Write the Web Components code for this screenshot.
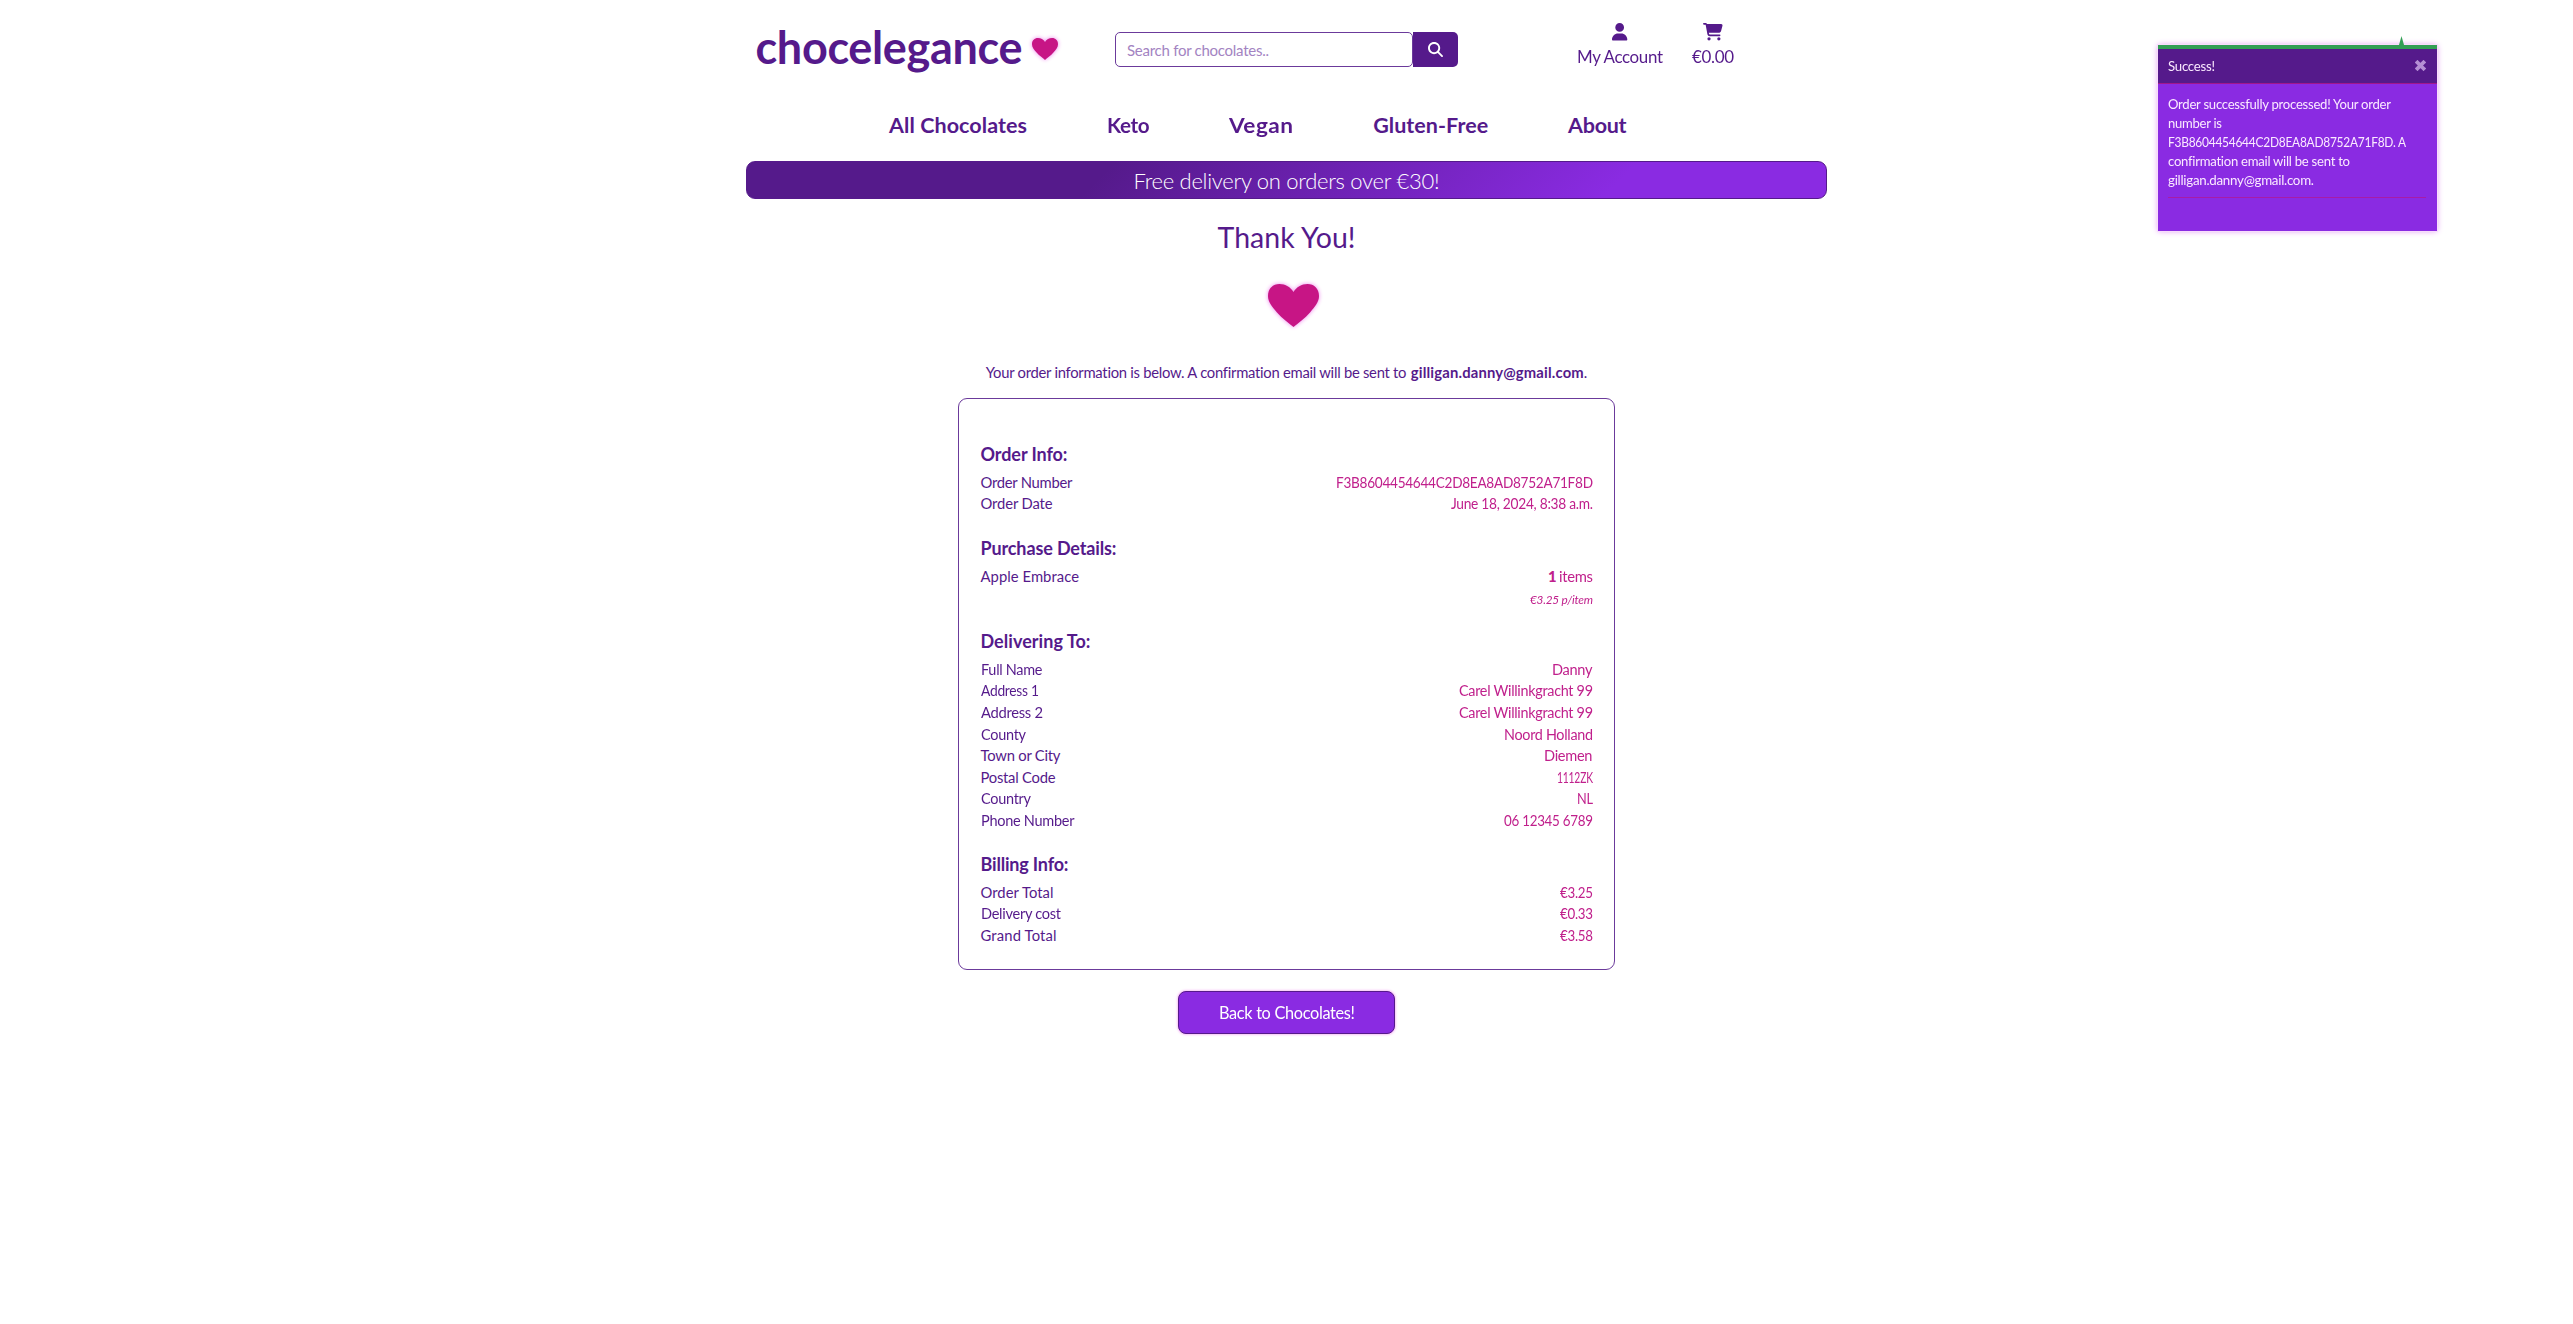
<!DOCTYPE html>
<html lang="en">
<head>
<meta charset="utf-8">
<title>chocelegance</title>
<style>
body{margin:0;background:#fff;color:#551a8b;font-family:Lato,"Liberation Sans",sans-serif}
</style>
</head>
<body>
<shop-page></shop-page>
<script>
const mount=(el,css,html)=>{
  const root=el.attachShadow({mode:'open'});
  const t=document.createElement('template');
  t.innerHTML=`<style>*{box-sizing:border-box}${css}</style>${html}`;
  root.append(t.content.cloneNode(true));
  return root;
};

/* A single line of text that fills the width given in "w":
   slight tracking first, then horizontal scaling for the rest. */
customElements.define('fit-text',class extends HTMLElement{
  connectedCallback(){
    if(this.shadowRoot)return;
    const root=mount(this,`:host{display:inline-block;white-space:nowrap}span{display:inline-block;transform-origin:0 50%}`,`<span><slot></slot></span>`);
    const w=+this.getAttribute('w');
    if(!w)return;
    const span=root.querySelector('span');
    const n=Math.max(1,this.textContent.length-1);
    const natural=span.getBoundingClientRect().width;
    const limit=parseFloat(getComputedStyle(this).fontSize)*.02;
    const gap=Math.max(-limit,Math.min(limit,(w-natural)/n));
    span.style.letterSpacing=gap+'px';
    span.style.transform=`scaleX(${w/(natural+gap*n)})`;
    span.style.marginRight='-100px';
    this.style.width=w+'px';
  }
});

customElements.define('glow-heart',class extends HTMLElement{
  constructor(){super();mount(this,`:host{display:block}svg{display:block;width:100%;height:100%;overflow:visible;filter:drop-shadow(0 0 2px #ee82ee)}`,
  `<svg viewBox="0 0 51 43" preserveAspectRatio="none"><path fill="#c71585" d="M25.5 43C21 39 14 34.500 9 28.500C4 22.500 0 18 0 12C0 4.500 5 0 11.500 0C17.500 0 22.500 3 25.500 8C28.500 3 33.500 0 39.500 0C46 0 51 4.500 51 12C51 18 47 22.500 42 28.500C37 34.500 30 39 25.500 43Z"/></svg>`)}
});

customElements.define('search-box',class extends HTMLElement{
  constructor(){super();mount(this,`
  :host{display:flex;width:343px;height:35px}
  .in{width:298px;border:1px solid #6b3a9b;border-radius:5px;display:flex;align-items:center;padding-left:11px;font-size:15px;color:#a383c2;font-weight:400}
  .go{width:45px;background:#551a8b;border-radius:0 5px 5px 0;display:flex;align-items:center;justify-content:center}
  svg{width:15px;height:15px}`,
  `<div class="in"><fit-text w="142">Search for chocolates..</fit-text></div><div class="go"><svg viewBox="0 0 512 512" fill="#fff"><path d="M416 208c0 45.900-14.900 88.300-40 122.700L502.600 457.400c12.500 12.500 12.500 32.800 0 45.300s-32.800 12.500-45.300 0L330.700 376c-34.400 25.200-76.800 40-122.700 40C93.100 416 0 322.900 0 208S93.100 0 208 0S416 93.100 416 208zM208 352a144 144 0 1 0 0-288 144 144 0 1 0 0 288z"/></svg></div>`)}
});

customElements.define('header-link',class extends HTMLElement{
  constructor(){super();mount(this,`
  :host{display:flex;flex-direction:column;align-items:center;gap:5.500px;font-size:17px;line-height:22px;font-weight:400;margin-top:23px}
  ::slotted(svg){display:block;height:17.500px;fill:#551a8b}`,`<slot name="icon"></slot><slot></slot>`)}
});

customElements.define('main-nav',class extends HTMLElement{
  constructor(){super();mount(this,`
  :host{display:flex;gap:79.9px;height:61px;padding:11px 0 0 143px;font-size:21.500px;line-height:28px;font-weight:700}`,`<slot></slot>`)}
});

customElements.define('promo-banner',class extends HTMLElement{
  constructor(){super();mount(this,`
  :host{display:flex;justify-content:center;height:38px;border:1px solid #551a8b;border-radius:9px;background:linear-gradient(135deg,#551a8b 33%,#8a2be2 80%);color:#fff;font-size:22px;line-height:38px;font-weight:300}`,`<slot></slot>`)}
});

customElements.define('info-row',class extends HTMLElement{
  constructor(){super();mount(this,`
  :host{display:flex;justify-content:space-between;font-size:14.800px;line-height:21.6px;height:21.6px}
  .v{color:#c0208c;margin-left:auto;display:flex;gap:2px}`,`<slot name="label"></slot><div class="v"><slot></slot></div>`)}
});

customElements.define('info-section',class extends HTMLElement{
  constructor(){super();mount(this,`
  :host{display:block}
  .h{font-size:18px;line-height:24px;font-weight:700;height:24px;margin-bottom:6px}`,`<div class="h"><slot name="title"></slot></div><slot></slot>`)}
});

customElements.define('order-card',class extends HTMLElement{
  constructor(){super();mount(this,`
  :host{display:block;width:657px;height:571.500px;border:1px solid #6b3a9b;border-radius:9px;padding:42.600px 21.500px 0 21.500px;margin-top:16px}`,`<slot></slot>`)}
});

customElements.define('action-button',class extends HTMLElement{
  constructor(){super();mount(this,`
  :host{display:flex;align-items:center;justify-content:center;width:217px;height:43px;margin-top:21.500px;border:1px solid #551a8b;border-radius:8px;background:#8a2be2;color:#fff;font-size:16.500px;box-shadow:0 0 3px #ee82ee}`,`<slot></slot>`)}
});

customElements.define('toast-message',class extends HTMLElement{
  constructor(){super();mount(this,`
  :host{position:absolute;left:2158px;top:45px;width:279px;height:186px;background:#8a2be2;color:#fbeaff;font-size:14px;box-shadow:0 0 6px #dd8ef0;outline:1px solid #f8dcfc;border-top:4px solid #339f55;box-sizing:border-box}
  .arrow{position:absolute;left:241px;top:-13px;width:5px;height:9px;background:#339f55;clip-path:polygon(50% 0,100% 100%,0 100%)}
  .head{height:35px;background:#551a8b;border-bottom:1px solid #a3168c;display:flex;align-items:center;justify-content:space-between;padding:0 11.500px 2px 10px}
  svg{width:11px;height:11px}
  .body{padding:9.500px 11px 0 10px;line-height:19px}
  .line{height:19px}
  .rule{height:1px;background:#a81ca6;margin-top:8.500px}`,
  `<div class="arrow"></div>
  <div class="head"><fit-text w="47">Success!</fit-text><svg viewBox="0 0 11 11"><path d="M2.500 2.500L8.500 8.500M8.500 2.500L2.500 8.500" stroke="#b58fd4" stroke-width="3.800" stroke-linecap="square"/></svg></div>
  <div class="body">
  <div class="line"><fit-text w="223">Order successfully processed! Your order</fit-text></div>
  <div class="line"><fit-text w="54">number is</fit-text></div>
  <div class="line"><fit-text w="238">F3B8604454644C2D8EA8AD8752A71F8D. A</fit-text></div>
  <div class="line"><fit-text w="182">confirmation email will be sent to</fit-text></div>
  <div class="line"><fit-text w="146">gilligan.danny@gmail.com.</fit-text></div>
  <div class="rule"></div></div>`)}
});

const section=(title,w,gap,rows)=>`<info-section style="margin-top:${gap}px"><fit-text slot="title" w="${w}">${title}</fit-text>${rows.map(([l,lw,v,vw])=>`<info-row><fit-text slot="label" w="${lw}">${l}</fit-text>${vw?`<fit-text w="${vw}">${v}</fit-text>`:v}</info-row>`).join('')}</info-section>`;

customElements.define('shop-page',class extends HTMLElement{
  constructor(){super();mount(this,`
  :host{display:block;height:1324px;overflow:hidden;position:relative}
  .wrap{width:1081px;margin:0 auto}
  header{display:flex;height:100px}
  .logo{width:369px;padding:17px 0 0 9.500px;display:flex;font-size:45px;line-height:60px;font-weight:700}
  .logo glow-heart{width:26px;height:22px;margin:21px 0 0 9px}
  search-box{margin-top:32px}
  .acct{margin-left:119px}.cart{margin-left:29px}
  main{display:flex;flex-direction:column;align-items:center}
  h1{margin:20.500px 0 0;font-size:28.500px;line-height:34px;height:34px;font-weight:400}
  .big{width:51px;height:43px;margin:30.500px 0 0 14px}
  p{margin:35px 0 0;display:flex;font-size:14.800px;line-height:20px}
  p b{margin-left:4px}
  .each{font-size:12px;font-style:italic;height:23.200px;padding-top:1px}
  .qty{font-weight:900}`,
  `<div class="wrap">
  <header>
   <div class="logo"><fit-text w="267">chocelegance</fit-text><glow-heart></glow-heart></div>
   <search-box></search-box>
   <header-link class="acct"><svg slot="icon" viewBox="0 0 448 512"><path d="M224 256A128 128 0 1 0 224 0a128 128 0 1 0 0 256zm-45.700 48C79.800 304 0 383.800 0 482.300C0 498.700 13.300 512 29.700 512H418.300c16.400 0 29.700-13.300 29.700-29.700C448 383.800 368.200 304 269.700 304H178.300z"/></svg><fit-text w="86">My Account</fit-text></header-link>
   <header-link class="cart"><svg slot="icon" viewBox="0 0 576 512"><path d="M0 24C0 10.700 10.700 0 24 0H69.500c22 0 41.500 12.800 50.600 32h411c26.300 0 45.500 25 38.600 50.400l-41 152.300c-8.500 31.400-37 53.300-69.500 53.300H170.700l5.400 28.500c2.200 11.300 12.100 19.500 23.600 19.500H488c13.300 0 24 10.700 24 24s-10.700 24-24 24H199.700c-34.600 0-64.300-24.600-70.700-58.500L77.400 54.500c-.7-3.800-4-6.500-7.900-6.500H24C10.700 48 0 37.300 0 24zM128 464a48 48 0 1 1 96 0 48 48 0 1 1-96 0zm336-48a48 48 0 1 1 0 96 48 48 0 1 1 0-96z"/></svg><fit-text w="42">€0.00</fit-text></header-link>
  </header>
  <main-nav><fit-text w="138">All Chocolates</fit-text><fit-text w="42.5">Keto</fit-text><fit-text w="64">Vegan</fit-text><fit-text w="115">Gluten-Free</fit-text><fit-text w="58.5">About</fit-text></main-nav>
  <promo-banner><fit-text w="306">Free delivery on orders over €30!</fit-text></promo-banner>
  <main>
   <h1><fit-text w="138">Thank You!</fit-text></h1>
   <glow-heart class="big"></glow-heart>
   <p><fit-text w="421">Your order information is below. A confirmation email will be sent to</fit-text><b><fit-text w="173">gilligan.danny@gmail.com</fit-text></b><span>.</span></p>
   <order-card>
   ${section('Order Info:',87,0,[['Order Number',92,'F3B8604454644C2D8EA8AD8752A71F8D',257],['Order Date',72,'June 18, 2024, 8:38 a.m.',142]])}
   ${section('Purchase Details:',136,21.6,[['Apple Embrace',98.5,'<span class="qty">1</span><fit-text w="34">items</fit-text>']])}
   <info-row class="each"><fit-text w="63">€3.25 p/item</fit-text></info-row>
   ${section('Delivering To:',110,17.7,[['Full Name',61.5,'Danny',40.5],['Address 1',58,'Carel Willinkgracht 99',134],['Address 2',62,'Carel Willinkgracht 99',134],['County',45,'Noord Holland',89],['Town or City',80,'Diemen',48.5],['Postal Code',75,'1112ZK',36],['Country',50,'NL',16],['Phone Number',93.5,'06 12345 6789',89]])}
   ${section('Billing Info:',88,20,[['Order Total',73,'€3.25',33],['Delivery cost',80,'€0.33',33],['Grand Total',76,'€3.58',33]])}
   </order-card>
   <action-button><fit-text w="136">Back to Chocolates!</fit-text></action-button>
  </main>
  </div>
  <toast-message></toast-message>`)}
});
</script>
</body>
</html>
